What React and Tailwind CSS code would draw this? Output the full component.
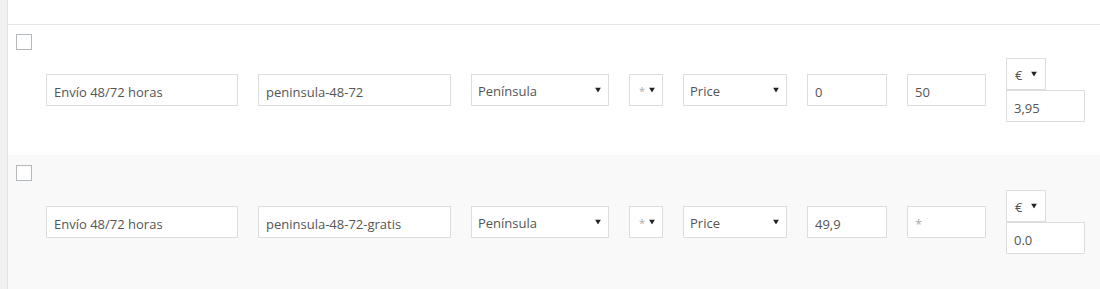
import React from "react";

const rows = [
  { label: "Envío 48/72 horas", slug: "peninsula-48-72", min: "0", max: "50", cost: "3,95", bg: "bg-white h-[130px]", cbTop: "mt-[9px]" },
  { label: "Envío 48/72 horas", slug: "peninsula-48-72-gratis", min: "49,9", max: "", cost: "0.0", bg: "bg-[#f9f9f9] flex-1", cbTop: "mt-[10px]" },
];

function Arrow({ right = "right-[7px]" }) {
  return (
    <svg width="6" height="5" viewBox="0 0 6 5" className={`pointer-events-none absolute top-1/2 -translate-y-1/2 ${right}`}>
      <path d="M0 0 H6 L3 5 Z" fill="#222" />
    </svg>
  );
}

function Select({ value, width }) {
  return (
    <div className={`relative h-[32px] ${width} border border-[#ddd] bg-white`}>
      <select
        defaultValue={value}
        className="h-full w-full appearance-none bg-transparent pl-[6px] pr-5 pt-[4px] outline-none"
      >
        <option>{value}</option>
      </select>
      <Arrow />
    </div>
  );
}

function Field({ value, width, placeholder }) {
  return (
    <input
      defaultValue={value}
      placeholder={placeholder}
      className={`h-[32px] ${width} border border-[#ddd] bg-white pl-[7px] pt-[4px] text-[#555] placeholder:text-[#aaa] outline-none`}
    />
  );
}

function Row({ r }) {
  return (
    <div className={`flex items-center ${r.bg}`}>
      <div className="w-[38px] self-start pl-2">
        <div className={`${r.cbTop} h-4 w-4 border border-[#b4b9be] bg-white`} />
      </div>
      <div className="flex items-center gap-5">
        <Field value={r.label} width="w-[192px]" />
        <Field value={r.slug} width="w-[193px]" />
        <Select value="Península" width="w-[138px]" />
        <div className="relative h-[32px] w-[34px] border border-[#ddd] bg-white">
          <span className="absolute left-[9px] top-[8px] text-[11px] text-[#aaa]">*</span>
          <Arrow right="right-[7px]" />
        </div>
        <Select value="Price" width="w-[104px]" />
        <Field value={r.min} width="w-[80px]" />
        <Field value={r.max} placeholder="*" width="w-[79px]" />
        <div className="flex flex-col">
          <div className="relative h-[32px] w-[40px] border border-[#ddd] bg-white">
            <span className="absolute left-[8px] top-[7px]">€</span>
            <Arrow right="right-[8px]" />
          </div>
          <Field value={r.cost} width="w-[79px]" />
        </div>
      </div>
    </div>
  );
}

export default function App() {
  return (
    <div className="flex h-[289px] w-[1100px] bg-white font-['Open_Sans',sans-serif] text-[13px] text-[#555]">
      <div className="w-[8px] border-r border-[#e2e2e2] bg-[#f1f1f1]" />
      <div className="flex flex-1 flex-col">
        <div className="h-[25px] border-b border-[#e5e5e5]" />
        {rows.map((r, i) => (
          <Row key={i} r={r} />
        ))}
      </div>
    </div>
  );
}
